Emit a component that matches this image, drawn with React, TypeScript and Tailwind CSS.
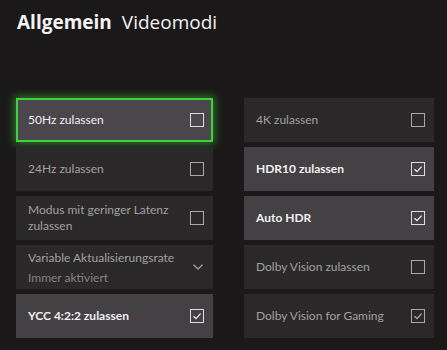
import { ReactNode } from "react";

// Kachel-Einstellungen
type Tile = {
  label: string;
  sub?: string;
  kind: "check" | "dropdown";
  checked?: boolean;
  dim?: boolean;
  focused?: boolean;
  twoLine?: boolean;
};

const left: Tile[] = [
  { label: "50Hz zulassen", kind: "check", focused: true },
  { label: "24Hz zulassen", kind: "check", dim: true },
  { label: "Modus mit geringer Latenz zulassen", kind: "check", dim: true, twoLine: true },
  { label: "Variable Aktualisierungsrate", sub: "Immer aktiviert", kind: "dropdown", dim: true },
  { label: "YCC 4:2:2 zulassen", kind: "check", checked: true },
];

const right: Tile[] = [
  { label: "4K zulassen", kind: "check", dim: true },
  { label: "HDR10 zulassen", kind: "check", checked: true },
  { label: "Auto HDR", kind: "check", checked: true },
  { label: "Dolby Vision zulassen", kind: "check", dim: true },
  { label: "Dolby Vision for Gaming", kind: "check", checked: true, dim: true },
];

function CheckBox({ checked, dim }: { checked?: boolean; dim?: boolean }) {
  return (
    <div
      className={`w-[14px] h-[14px] border-[1.5px] flex items-center justify-center shrink-0 ${
        dim ? "border-[#a9a7a8]" : "border-[#dedcdd]"
      }`}
    >
      {checked && (
        <svg width="10" height="10" viewBox="0 0 10 10">
          <path
            d="M1.5 5.2 L4 7.6 L8.6 2.6"
            fill="none"
            stroke={dim ? "#a9a7a8" : "#e8e6e7"}
            strokeWidth="1.4"
          />
        </svg>
      )}
    </div>
  );
}

function Chevron() {
  return (
    <svg width="12" height="8" viewBox="0 0 12 8">
      <path d="M1.5 1.8 L6 6 L10.5 1.8" fill="none" stroke="#9e9c9d" strokeWidth="1.3" />
    </svg>
  );
}

function SettingTile({ tile }: { tile: Tile }) {
  const bg = tile.focused
    ? "bg-[#4a464c] border-2 border-[#3fd23f] shadow-[0_0_8px_2px_rgba(60,210,60,0.5)]"
    : tile.dim
    ? "bg-[#2a2829]"
    : "bg-[#434143]";
  const text = tile.dim ? "text-[#a2a0a1]" : "text-[#f2f0f1]";

  let body: ReactNode;
  if (tile.kind === "dropdown") {
    body = (
      <div className="flex flex-col leading-[20px] pt-[2px]">
        <span>{tile.label}</span>
        <span className="text-[#858384]">{tile.sub}</span>
      </div>
    );
  } else if (tile.twoLine) {
    body = <span className="leading-[16px] w-[150px]">{tile.label}</span>;
  } else {
    body = (
      <span className={tile.dim || tile.focused ? "" : "font-bold"}>{tile.label}</span>
    );
  }

  return (
    <div
      className={`h-[44px] flex items-center justify-between ${
        tile.focused ? "pl-[10px] pr-[7px]" : "pl-[12px] pr-[9px]"
      } ${bg} ${text}`}
    >
      {body}
      {tile.kind === "check" ? <CheckBox checked={tile.checked} dim={tile.dim} /> : <Chevron />}
    </div>
  );
}

export default function App() {
  return (
    <div className="w-[447px] h-[350px] bg-[#1b1819] pl-[17px] pt-[8px] overflow-hidden text-[12px] font-['Lato',sans-serif]">
      <div className="flex items-baseline gap-[10px] text-[19px] text-[#f4f2f3] leading-[28px] font-['Open_Sans',sans-serif]">
        <span className="font-bold">Allgemein</span>
        <span>Videomodi</span>
      </div>

      <div className="mt-[62px] grid grid-cols-[197px_190px] gap-x-[31px] -ml-[1px]">
        <div className="flex flex-col gap-[5px]">
          {left.map((t) => (
            <SettingTile key={t.label} tile={t} />
          ))}
        </div>
        <div className="flex flex-col gap-[5px]">
          {right.map((t) => (
            <SettingTile key={t.label} tile={t} />
          ))}
        </div>
      </div>
    </div>
  );
}
